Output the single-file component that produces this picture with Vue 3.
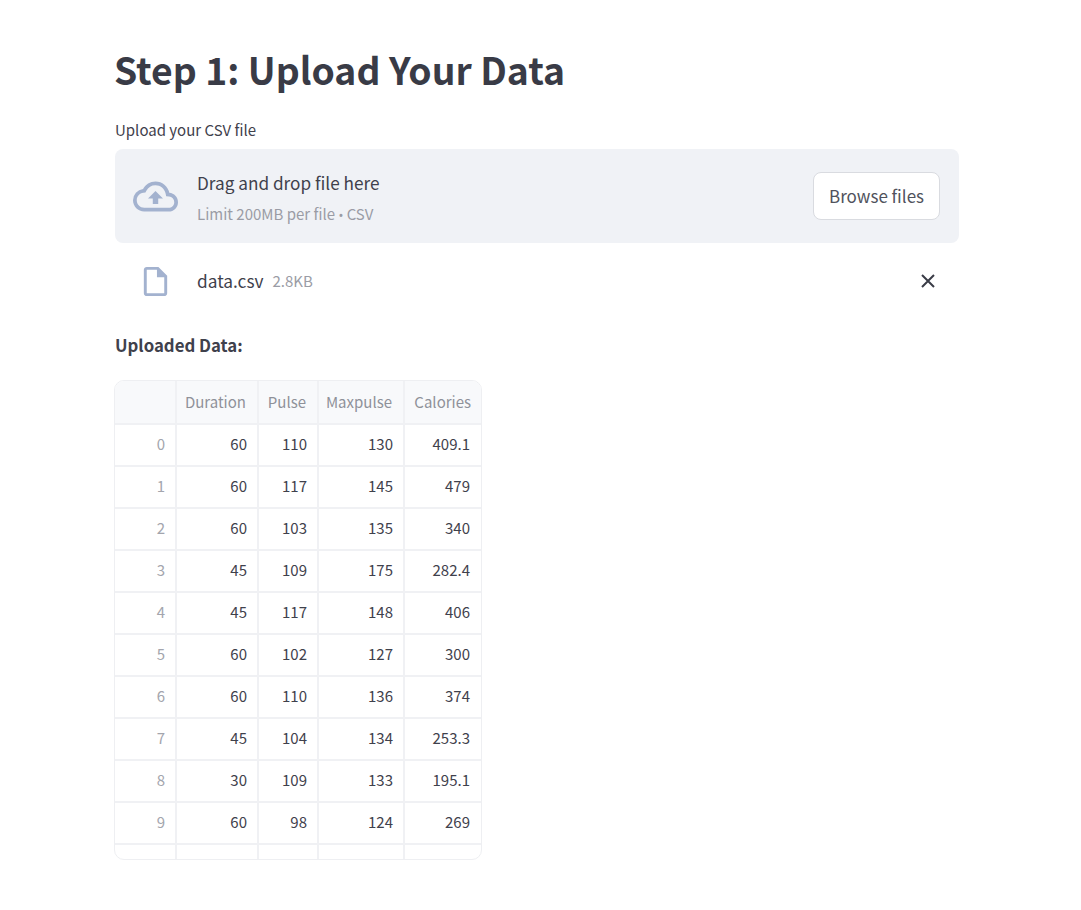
<script setup>
const columns = ['Duration', 'Pulse', 'Maxpulse', 'Calories']
const rows = [
  [60, 110, 130, '409.1'],
  [60, 117, 145, '479'],
  [60, 103, 135, '340'],
  [45, 109, 175, '282.4'],
  [45, 117, 148, '406'],
  [60, 102, 127, '300'],
  [60, 110, 136, '374'],
  [45, 104, 134, '253.3'],
  [30, 109, 133, '195.1'],
  [60, 98, 124, '269'],
]
</script>

<template>
  <main class="page">
    <h1>Step 1: Upload Your Data</h1>
    <p class="field-label">Upload your CSV file</p>

    <!-- Dropzone -->
    <section class="dropzone">
      <svg class="cloud" viewBox="0 0 24 24" width="45" height="45" fill="#a3b2cf">
        <path d="M19.35 10.04A7.49 7.49 0 0 0 12 4C9.11 4 6.6 5.64 5.35 8.04A5.994 5.994 0 0 0 0 14c0 3.31 2.69 6 6 6h13c2.76 0 5-2.24 5-5 0-2.64-2.05-4.78-4.65-4.96zM19 18H6c-2.21 0-4-1.79-4-4 0-2.05 1.53-3.76 3.56-3.97l1.07-.11.5-.95A5.469 5.469 0 0 1 12 6c2.62 0 4.88 1.86 5.39 4.43l.3 1.5 1.53.11A2.98 2.98 0 0 1 22 15c0 1.65-1.35 3-3 3zM8 13h2.55v3h2.9v-3H16l-4-4z" />
      </svg>
      <div class="drop-text">
        <span class="drop-title">Drag and drop file here</span>
        <small>Limit 200MB per file <span class="dot">•</span> CSV</small>
      </div>
      <button class="browse">Browse files</button>
    </section>

    <!-- Uploaded file -->
    <div class="file-row">
      <svg class="file-icon" viewBox="0 0 24 24" width="35" height="35" fill="#a3b2cf">
        <path d="M6 2c-1.1 0-2 .9-2 2v16c0 1.1.9 2 2 2h12c1.1 0 2-.9 2-2V8l-6-6H6zm0 2h7v5h5v11H6V4z" />
      </svg>
      <span class="file-name">data.csv</span>
      <span class="file-size">2.8KB</span>
      <svg class="close" viewBox="0 0 16 16" width="16" height="16" fill="none" stroke="#3a3c47" stroke-width="2">
        <path d="M2 2l12 12M14 2L2 14" />
      </svg>
    </div>

    <p class="subhead">Uploaded Data:</p>

    <!-- Dataframe -->
    <div class="table">
      <div class="cell head"></div>
      <div v-for="col in columns" :key="col" class="cell head">{{ col }}</div>
      <template v-for="(row, i) in rows" :key="i">
        <div class="cell index">{{ i }}</div>
        <div v-for="(val, j) in row" :key="j" class="cell">{{ val }}</div>
      </template>
      <div v-for="n in 5" :key="'tail' + n" class="cell tail"></div>
    </div>
  </main>
</template>

<style>
body {
  background: #fff;
}
</style>

<style scoped>
.page {
  box-sizing: border-box;
  width: 1081px;
  height: 910px;
  padding: 47px 122px 0 115px;
  font-family: "Noto Sans CJK SC", "Noto Sans", sans-serif;
  color: #3f414c;
  overflow: hidden;
}

h1 {
  margin: -2px 0 0 -1px;
  font-size: 37.3px;
  line-height: 48px;
  font-weight: 700;
  color: #393b46;
}

.field-label {
  margin: 27px 0 0;
  font-size: 15px;
  line-height: 20px;
}

/* Dropzone */
.dropzone {
  display: flex;
  align-items: center;
  height: 94px;
  margin-top: 9px;
  padding: 0 19px 0 18px;
  background: #f0f2f6;
  border-radius: 8px;
}

.cloud {
  margin-right: 19px;
}

.drop-text {
  display: flex;
  flex-direction: column;
  flex: 1;
  padding-top: 4px;
}

.drop-title {
  font-size: 17.2px;
  line-height: 24px;
}

.drop-text small {
  margin-top: 9px;
  font-size: 15px;
  line-height: 20px;
  color: #9a9ca5;
}

.dot {
  font-family: "Noto Sans", sans-serif;
  font-size: 13px;
}

.browse {
  width: 127px;
  height: 48px;
  padding: 0 0 2px;
  background: #fff;
  border: 1px solid #d9dbe0;
  border-radius: 8px;
  font: inherit;
  font-size: 17px;
  color: #50525c;
}

/* File row */
.file-row {
  display: flex;
  align-items: center;
  height: 32px;
  margin-top: 22px;
  padding-left: 23px;
}

.file-icon {
  flex-shrink: 0;
}

.file-name {
  margin: 0 0 2px 24px;
  font-size: 17.3px;
}

.file-size {
  margin: 0 0 2px 9px;
  font-size: 15px;
  color: #9a9ca5;
}

.close {
  margin-left: auto;
  margin-right: 23px;
}

.subhead {
  margin: 36px 0 0;
  font-size: 16.8px;
  line-height: 24px;
  font-weight: 700;
}

/* Dataframe */
.table {
  display: grid;
  grid-template-columns: 62px 82px 60px 86px 77px;
  grid-template-rows: 44px repeat(10, 42px) 14px;
  box-sizing: border-box;
  width: 368px;
  margin: 23px 0 0 -1px;
  border: 1px solid #eeeff2;
  border-radius: 10px;
  overflow: hidden;
}

.cell {
  box-sizing: border-box;
  padding: 0 10px 0 0;
  border-right: 2px solid #f0f1f4;
  border-bottom: 2px solid #f0f1f4;
  font-size: 15px;
  line-height: 38px;
  text-align: right;
  color: #3f414c;
}

.cell:nth-child(5n) {
  border-right: none;
  padding-right: 12px;
}

.cell.head {
  padding-right: 11px;
  background: #f8f9fb;
  line-height: 42px;
  color: #8f9199;
}

.index {
  color: #a3a5ad;
}

.tail {
  border-bottom: none;
}
</style>
